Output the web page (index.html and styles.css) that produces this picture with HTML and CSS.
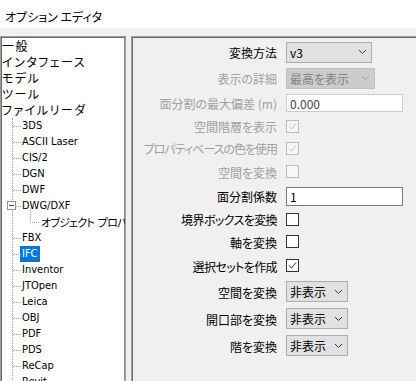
FILE: index.html
```html
<!DOCTYPE html>
<html>
    <head>
        <meta charset="utf-8">
        <title>オプション エディタ</title>
        <link rel="stylesheet" href="styles.css">
    </head>
    <body>
        <!-- タイトル -->
        <div class="titlebar">オプション エディタ</div>
        <div class="main">
            <!-- ツリー -->
            <div class="tree">
                <div class="node top">一般</div>
                <div class="node top">インタフェース</div>
                <div class="node top">モデル</div>
                <div class="node top">ツール</div>
                <div class="node top">ファイルリーダ</div>
                <div class="children">
                    <div class="node child">3DS</div>
                    <div class="node child">ASCII Laser</div>
                    <div class="node child">CIS/2</div>
                    <div class="node child">DGN</div>
                    <div class="node child">DWF</div>
                    <div class="node child open"><span class="toggle"></span>DWG/DXF</div>
                    <div class="node grandchild">オブジェクト プロパ</div>
                    <div class="node child">FBX</div>
                    <div class="node child"><span class="selected">IFC</span></div>
                    <div class="node child">Inventor</div>
                    <div class="node child">JTOpen</div>
                    <div class="node child">Leica</div>
                    <div class="node child">OBJ</div>
                    <div class="node child">PDF</div>
                    <div class="node child">PDS</div>
                    <div class="node child">ReCap</div>
                    <div class="node child">Revit</div>
                </div>
            </div>
            <!-- 設定 -->
            <div class="panel">
                <div class="form">
                    <div class="label">変換方法</div>
                    <div class="select w86"><span>v3</span><svg class="chev" viewBox="0 0 7 4"><path d="M0 0l3.5 3.5L7 0"/></svg></div>

                    <div class="label off">表示の詳細</div>
                    <div class="select w89 disabled"><span>最高を表示</span><svg class="chev" viewBox="0 0 7 4"><path d="M0 0l3.5 3.5L7 0"/></svg></div>

                    <div class="label off">面分割の最大偏差 (m)</div>
                    <div class="textbox disabled">0.000</div>

                    <div class="label off">空間階層を表示</div>
                    <svg class="cb disabled" viewBox="0 0 13 13"><rect x=".5" y=".5" width="12" height="12"/><path d="M3 6.5l2.5 2.5 4.5-5.5"/></svg>

                    <div class="label off tight">プロパティベースの色を使用</div>
                    <svg class="cb disabled" viewBox="0 0 13 13"><rect x=".5" y=".5" width="12" height="12"/><path d="M3 6.5l2.5 2.5 4.5-5.5"/></svg>

                    <div class="label off">空間を変換</div>
                    <svg class="cb disabled" viewBox="0 0 13 13"><rect x=".5" y=".5" width="12" height="12"/></svg>

                    <div class="label">面分割係数</div>
                    <div class="textbox">1</div>

                    <div class="label narrow">境界ボックスを変換</div>
                    <svg class="cb" viewBox="0 0 13 13"><rect x=".5" y=".5" width="12" height="12"/></svg>

                    <div class="label">軸を変換</div>
                    <svg class="cb" viewBox="0 0 13 13"><rect x=".5" y=".5" width="12" height="12"/></svg>

                    <div class="label narrow">選択セットを作成</div>
                    <svg class="cb" viewBox="0 0 13 13"><rect x=".5" y=".5" width="12" height="12"/><path d="M3 6.5l2.5 2.5 4.5-5.5"/></svg>

                    <div class="label">空間を変換</div>
                    <div class="select w62"><span>非表示</span><svg class="chev" viewBox="0 0 7 4"><path d="M0 0l3.5 3.5L7 0"/></svg></div>

                    <div class="label">開口部を変換</div>
                    <div class="select w62"><span>非表示</span><svg class="chev" viewBox="0 0 7 4"><path d="M0 0l3.5 3.5L7 0"/></svg></div>

                    <div class="label">階を変換</div>
                    <div class="select w62"><span>非表示</span><svg class="chev" viewBox="0 0 7 4"><path d="M0 0l3.5 3.5L7 0"/></svg></div>
                </div>
            </div>
        </div>
    </body>
</html>
```

FILE: styles.css
```css
html, body {
    margin: 0;
    padding: 0;
}
body {
    width: 416px;
    height: 381px;
    overflow: hidden;
    background: #f0f0f0;
    color: #000;
    font-family: "Noto Sans CJK JP", sans-serif;
    font-size: 12px;
    font-feature-settings: "palt";
}
.titlebar {
    height: 28px;
    line-height: 34px;
    padding-left: 5px;
    background: #fff;
}
.main {
    display: flex;
    gap: 5px;
    padding-top: 8px;
}
/* ツリー */
.tree {
    width: 126px;
    height: 360px;
    flex: none;
    box-sizing: border-box;
    background: #fff;
    border: 1px solid #a0a0a0;
    box-shadow: inset 1px 1px 0 #696969, inset -1px 0 0 #8a8a8a;
    padding-top: 1px;
    overflow: hidden;
}
.node {
    height: 16px;
    line-height: 16px;
    padding-left: 1px;
    white-space: nowrap;
    position: relative;
}
.top {
    letter-spacing: 1.5px;
}
.children {
    position: relative;
}
.children::before {
    content: "";
    position: absolute;
    left: 11px;
    top: 0;
    bottom: 0;
    border-left: 1px dotted #a0a0a0;
}
.child {
    padding-left: 21px;
    font-family: "DejaVu Sans Condensed", "Noto Sans CJK JP", sans-serif;
    font-size: 11px;
}
.child::before {
    content: "";
    position: absolute;
    left: 12px;
    top: 8px;
    width: 8px;
    border-top: 1px dotted #a0a0a0;
}
.grandchild {
    padding-left: 40px;
    font-size: 11px;
    letter-spacing: -0.8px;
    word-spacing: 2px;
}
.grandchild::before {
    content: "";
    position: absolute;
    left: 29px;
    top: -4px;
    height: 12px;
    width: 8px;
    border-left: 1px dotted #a0a0a0;
    border-bottom: 1px dotted #a0a0a0;
}
.toggle {
    position: absolute;
    left: 6px;
    top: 3px;
    width: 7px;
    height: 7px;
    border: 1px solid #919191;
    background: #fff;
    z-index: 1;
}
.toggle::after {
    content: "";
    position: absolute;
    left: 1px;
    top: 3px;
    width: 5px;
    border-top: 1px solid #1c4f8f;
}
.selected {
    display: inline-block;
    margin-left: -2px;
    padding: 0 2px;
    background: #0078d7;
    color: #fff;
}
/* 設定パネル */
.panel {
    width: 300px;
    height: 360px;
    flex: none;
    box-sizing: border-box;
    border: 1px solid #a0a0a0;
    box-shadow: inset 1px 1px 0 #696969;
    padding: 2px 0 0 1px;
}
.form {
    display: grid;
    grid-template-columns: 144px 1fr;
    grid-template-rows: 26px 26px 24px 22px 22px 25px 24px 22px 23px 25px 27px 27px 27px;
    column-gap: 9px;
    align-items: center;
}
.label {
    display: flex;
    justify-content: flex-end;
    white-space: nowrap;
    line-height: 16px;
    padding-top: 2px;
}
.label.off {
    color: #a0a0a0;
}
.label.tight {
    letter-spacing: -1px;
}
.label.narrow {
    letter-spacing: -0.6px;
}
.select {
    height: 21px;
    box-sizing: border-box;
    display: flex;
    align-items: center;
    justify-content: space-between;
    padding: 0 5px 0 3px;
    background: #e1e1e1;
    border: 1px solid #adadad;
    color: #000;
}
.select.disabled {
    background: #cccccc;
    border-color: #bfbfbf;
    color: #838383;
}
.w86 { width: 86px; }
.w89 { width: 89px; }
.w62 { width: 62px; }
.chev {
    width: 7px;
    height: 4px;
    fill: none;
    stroke: #333;
    stroke-width: 1;
}
.select.disabled .chev {
    stroke: #a6a6a6;
}
.textbox {
    width: 117px;
    height: 19px;
    box-sizing: border-box;
    line-height: 17px;
    padding-left: 3px;
    background: #fff;
    border: 1px solid #7a7a7a;
}
.textbox.disabled {
    height: 18px;
    border-color: #cccccc;
    color: #444;
}
.cb {
    width: 13px;
    height: 13px;
    fill: #fff;
    stroke: #333;
    stroke-width: 1;
}
.cb path {
    fill: none;
}
.cb.disabled {
    stroke: #bcbcbc;
    fill: #f7f7f7;
}
```
